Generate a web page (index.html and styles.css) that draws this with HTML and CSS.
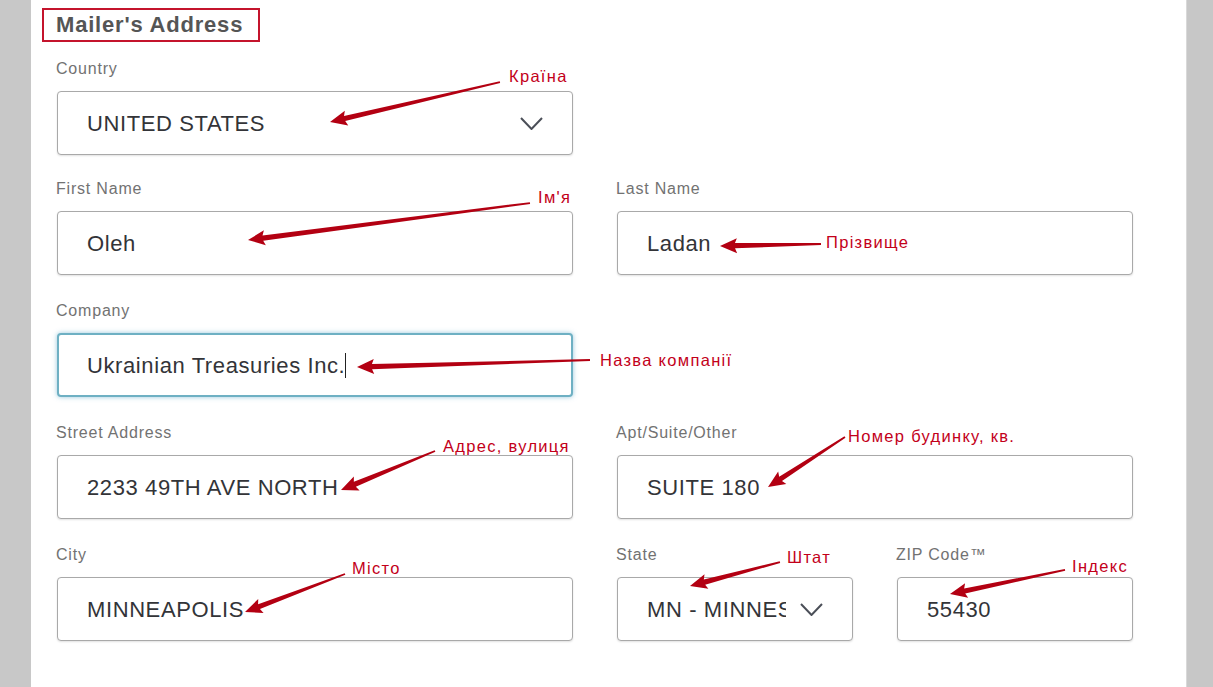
FILE: index.html
```html
<!DOCTYPE html>
<html lang="en">
<head>
<meta charset="utf-8">
<title>Mailer's Address</title>
<link rel="stylesheet" href="styles.css">
</head>
<body>
<div class="page">
  <div class="gutter gutter-left"></div>
  <main class="sheet">
    <h2 class="section-title">Mailer's Address</h2>
    <div class="form">
      <div class="row row-first">
        <div class="field">
          <span class="field-label">Country</span>
          <div class="control select">
            <span class="value">UNITED STATES</span>
            <svg class="chevron" width="23" height="13" viewBox="0 0 23 13"><path d="M1 1 L11.5 12 L22 1"/></svg>
          </div>
        </div>
      </div>
      <div class="row">
        <div class="field">
          <span class="field-label">First Name</span>
          <div class="control"><span class="value">Oleh</span></div>
        </div>
        <div class="field">
          <span class="field-label">Last Name</span>
          <div class="control"><span class="value">Ladan</span></div>
        </div>
      </div>
      <div class="row">
        <div class="field">
          <span class="field-label">Company</span>
          <div class="control control-focus"><span class="value">Ukrainian Treasuries Inc.</span><span class="caret"></span></div>
        </div>
      </div>
      <div class="row">
        <div class="field">
          <span class="field-label">Street Address</span>
          <div class="control"><span class="value">2233 49TH AVE NORTH</span></div>
        </div>
        <div class="field">
          <span class="field-label">Apt/Suite/Other</span>
          <div class="control"><span class="value">SUITE 180</span></div>
        </div>
      </div>
      <div class="row">
        <div class="field">
          <span class="field-label">City</span>
          <div class="control"><span class="value">MINNEAPOLIS</span></div>
        </div>
        <div class="subrow">
          <div class="field">
            <span class="field-label">State</span>
            <div class="control select">
              <span class="value">MN - MINNESOTA</span>
              <svg class="chevron" width="23" height="13" viewBox="0 0 23 13"><path d="M1 1 L11.5 12 L22 1"/></svg>
            </div>
          </div>
          <div class="field">
            <span class="field-label">ZIP Code™</span>
            <div class="control"><span class="value">55430</span></div>
          </div>
        </div>
      </div>
    </div>
  </main>
  <div class="gutter gutter-right"></div>

  <svg class="annotations" width="1213" height="687" viewBox="0 0 1213 687">
    <g class="arrows">
      <polygon transform="translate(330 122) rotate(-13.24)" points="0,0 17,-7.5 15,-2.6 174.6,-0.9 174.6,0.9 15,2.6 17,7.5"/>
      <polygon transform="translate(248 240) rotate(-7.47)" points="0,0 17,-7.5 15,-2.6 284.4,-0.9 284.4,0.9 15,2.6 17,7.5"/>
      <polygon transform="translate(720 246) rotate(-1.13)" points="0,0 17,-7.5 15,-2.6 101,-0.9 101,0.9 15,2.6 17,7.5"/>
      <polygon transform="translate(357 367) rotate(-1.72)" points="0,0 17,-7.5 15,-2.6 233.1,-0.9 233.1,0.9 15,2.6 17,7.5"/>
      <polygon transform="translate(341 490) rotate(-22.53)" points="0,0 17,-7.5 15,-2.6 101.8,-0.9 101.8,0.9 15,2.6 17,7.5"/>
      <polygon transform="translate(768 487) rotate(-33)" points="0,0 17,-7.5 15,-2.6 91.8,-0.9 91.8,0.9 15,2.6 17,7.5"/>
      <polygon transform="translate(245 612) rotate(-20.8)" points="0,0 17,-7.5 15,-2.6 107,-0.9 107,0.9 15,2.6 17,7.5"/>
      <polygon transform="translate(690 586) rotate(-14.93)" points="0,0 17,-7.5 15,-2.6 93.1,-0.9 93.1,0.9 15,2.6 17,7.5"/>
      <polygon transform="translate(950 594) rotate(-11.79)" points="0,0 17,-7.5 15,-2.6 117.5,-0.9 117.5,0.9 15,2.6 17,7.5"/>
    </g>
    <g class="notes">
      <text x="509" y="82">Країна</text>
      <text x="538" y="203">Ім'я</text>
      <text x="826" y="248">Прізвище</text>
      <text x="600" y="366">Назва компанії</text>
      <text x="443" y="452">Адрес, вулиця</text>
      <text x="848" y="442">Номер будинку, кв.</text>
      <text x="352" y="574">Місто</text>
      <text x="787" y="563">Штат</text>
      <text x="1072" y="572">Індекс</text>
    </g>
  </svg>
</div>
</body>
</html>
```

FILE: styles.css
```css
* {
  box-sizing: border-box;
  margin: 0;
  padding: 0;
}

html,
body {
  width: 1213px;
  height: 687px;
  overflow: hidden;
}

body {
  font-family: "Liberation Sans", Arial, sans-serif;
  background: #c8c8c8;
}

.page {
  position: relative;
  display: flex;
  height: 687px;
}

.gutter-left {
  width: 31px;
  background: #c8c8c8;
}

.gutter-right {
  width: 27px;
  background: #c7c7c7;
  border-left: 1px solid #d9d9d9;
}

.sheet {
  flex: 1;
  background: #ffffff;
  padding: 8px 0 0 11px;
}

.section-title {
  display: inline-block;
  height: 34px;
  border: 2px solid #c4142c;
  padding: 0 15px 0 12px;
  font-size: 22px;
  line-height: 30px;
  font-weight: bold;
  letter-spacing: 0.8px;
  color: #555555;
}

.form {
  display: flex;
  flex-direction: column;
  gap: 27px;
  margin: 18px 0 0 15px;
  width: 1076px;
}

.row {
  display: grid;
  grid-template-columns: 516px 516px;
  column-gap: 44px;
}

.row-first {
  margin-bottom: -2px;
}

.subrow {
  display: grid;
  grid-template-columns: 236px 236px;
  column-gap: 44px;
}

.field-label {
  display: block;
  margin: 0 0 13px -1px;
  font-size: 16px;
  line-height: 18px;
  letter-spacing: 0.8px;
  color: #727272;
}

.control {
  display: flex;
  align-items: center;
  gap: 14px;
  height: 64px;
  padding: 1px 29px 0 29px;
  border: 1px solid #a9a9a9;
  border-radius: 4px;
  background: #fff;
  box-shadow: 0 1px 2px rgba(0, 0, 0, 0.12);
  font-size: 22px;
  letter-spacing: 0.6px;
  color: #333438;
}

.control-focus {
  gap: 0;
  border: 2px solid #6eb0c3;
  padding-left: 28px;
  box-shadow: 0 0 5px rgba(110, 176, 205, 0.7);
}

.value {
  white-space: nowrap;
}

.select .value {
  flex: 1;
  min-width: 0;
  overflow: hidden;
}

.caret {
  width: 1px;
  height: 25px;
  margin-left: 0;
  background: #222;
}

.chevron {
  flex: none;
}

.chevron path {
  fill: none;
  stroke: #4b4f58;
  stroke-width: 2;
}

.annotations {
  position: absolute;
  top: 0;
  left: 0;
  pointer-events: none;
}

.arrows polygon {
  fill: #b30012;
}

.notes text {
  font-family: "Liberation Sans", Arial, sans-serif;
  font-size: 16.5px;
  letter-spacing: 1.3px;
  fill: #c3001a;
}
```
